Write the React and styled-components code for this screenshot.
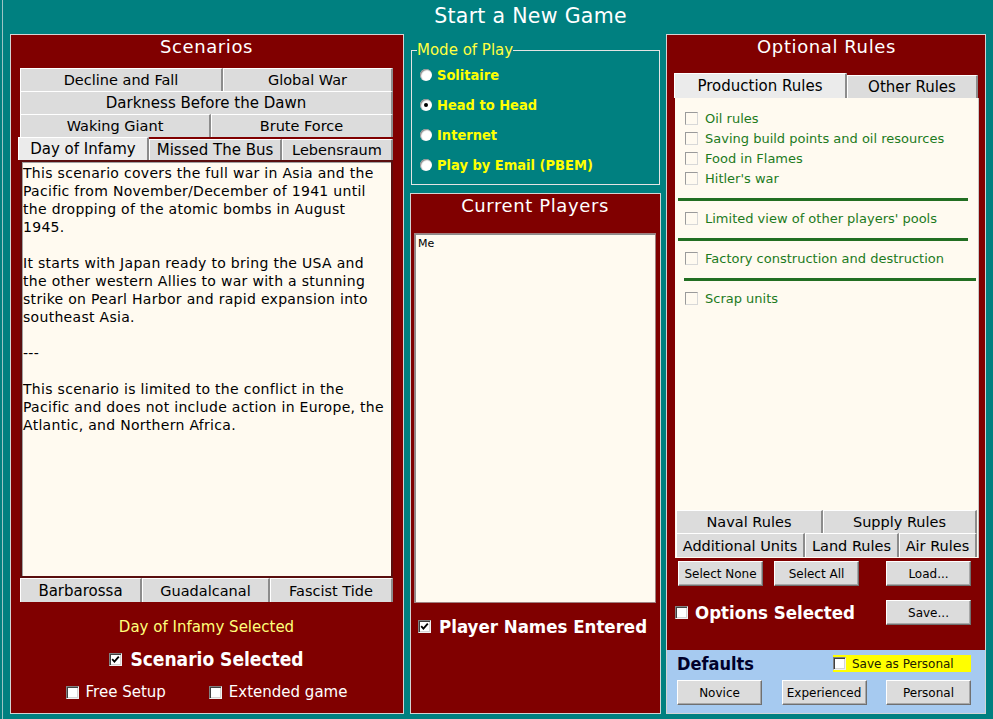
import React from "react";
import styled, { createGlobalStyle } from "styled-components";

const FONT = `"DejaVu Sans", Verdana, sans-serif`;
const BOLDFONT = `"DejaVu Sans Condensed", "DejaVu Sans", Verdana, sans-serif`;

const GlobalStyle = createGlobalStyle`
  html, body { margin: 0; padding: 0; background: #008080; }
  body { font-family: ${FONT}; }
  * { box-sizing: border-box; }
`;

const Window = styled.div`
  width: 993px;
  height: 719px;
  background: #008080;
  display: flex;
  flex-direction: column;
  overflow: hidden;
  box-shadow: inset 2px 0 0 #008080, inset 3px 0 0 #9cc4c4;
`;

const Header = styled.div`
  height: 34px;
  display: flex;
  align-items: center;
  justify-content: center;
  padding: 0 0 3px 68px;
  color: #ffffff;
  font-size: 20.5px;
  letter-spacing: 0.3px;
`;

const Columns = styled.div`
  display: flex;
  gap: 6px;
  padding-left: 10px;
  height: 680px;
`;

const Panel = styled.div`
  width: ${(p) => p.$w}px;
  margin-left: ${(p) => p.$ml ?? 0}px;
  background: #800000;
  border: 1px solid #d4d4d4;
  display: flex;
  flex-direction: column;
  padding: ${(p) => p.$pad || "0"};
`;

const PanelTitle = styled.div`
  height: 24px;
  line-height: 24px;
  text-align: center;
  color: #fff;
  font-size: 18px;
  letter-spacing: 0.6px;
  margin-bottom: ${(p) => p.$mb ?? 0}px;
`;

const TabRow = styled.div`
  display: flex;
  height: ${(p) => p.$h ?? 23}px;
  align-items: flex-end;
`;

const Tab = styled.div`
  width: ${(p) => p.$w}px;
  flex: ${(p) => (p.$w ? "none" : "1")};
  height: ${(p) => (p.$short ? "calc(100% - 2px)" : "100%")};
  margin-left: ${(p) => p.$ml ?? 0}px;
  background: ${(p) => (p.$active ? "#ebebeb" : "#dcdcdc")};
  border-top: 1px solid #ffffff;
  border-left: 1px solid #ffffff;
  border-right: 2px solid #8c8c8c;
  color: #000;
  font-size: ${(p) => p.$fs ?? 14.5}px;
  display: flex;
  align-items: center;
  justify-content: center;
  white-space: nowrap;
`;

const TextArea = styled.div`
  height: ${(p) => p.$h}px;
  background: #fffaf0;
  border: 2px solid #5a0e0e;
  box-shadow: inset 1px 1px 0 #a0a0a0;
  padding: 2px 1px 0 1px;
  color: #000;
  font-size: 14px;
  letter-spacing: 0.3px;
  line-height: 18px;
  white-space: pre-wrap;
`;

const StatusText = styled.div`
  text-align: center;
  color: #ffff7a;
  font-size: 15px;
  line-height: 20px;
  margin-top: ${(p) => p.$mt ?? 0}px;
`;

const CheckRow = styled.label`
  display: flex;
  align-items: center;
  justify-content: ${(p) => (p.$center ? "center" : "flex-start")};
  gap: ${(p) => p.$gap ?? 6}px;
  height: ${(p) => p.$h ?? 20}px;
  margin-top: ${(p) => p.$mt ?? 0}px;
  padding-left: ${(p) => p.$pl ?? 0}px;
  color: ${(p) => p.$color || "#fff"};
  font-family: ${(p) => (p.$bold ? BOLDFONT : FONT)};
  font-weight: ${(p) => (p.$bold ? 700 : 400)};
  font-size: ${(p) => p.$fs ?? 14}px;
  white-space: nowrap;
`;

const BoxWrap = styled.span`
  display: inline-flex;
  align-items: center;
  justify-content: center;
  flex: none;
  width: 13px;
  height: 13px;
  background: ${(p) => (p.$flat ? "#fffaf0" : "#ffffff")};
  border: 1px solid;
  border-color: ${(p) =>
    p.$flat ? "#9a9a9a #d8d8d8 #d8d8d8 #9a9a9a" : "#808080 #f0f0f0 #f0f0f0 #808080"};
  box-shadow: ${(p) => (p.$flat ? "none" : "inset 1px 1px 0 #404040, inset -1px -1px 0 #d4d4d4")};
`;

const Check = ({ checked, flat }) => (
  <BoxWrap $flat={flat}>
    {checked && (
      <svg width="9" height="9" viewBox="0 0 9 9">
        <path d="M1.2 4.2 L3.4 6.6 L7.8 1.6" fill="none" stroke="#000" strokeWidth="1.8" />
      </svg>
    )}
  </BoxWrap>
);

const Inline = styled.div`
  display: flex;
  justify-content: center;
  gap: ${(p) => p.$gap ?? 40}px;
  margin-top: ${(p) => p.$mt ?? 0}px;
`;

/* Middle column */
const MiddleCol = styled.div`
  width: 251px;
  display: flex;
  flex-direction: column;
  gap: 8px;
`;

const ModeSet = styled.fieldset`
  margin: 8px 1px 0 1px;
  padding: 2px 0 0 8px;
  height: 143px;
  border: 1px solid #e4e4e4;
  display: flex;
  flex-direction: column;
`;

const Legend = styled.legend`
  padding: 0;
  margin-left: -3px;
  color: #ffff40;
  font-size: 15px;
  line-height: 16px;
`;

const RadioRow = styled.label`
  display: flex;
  align-items: center;
  gap: 5px;
  height: 30px;
  color: #ffff00;
  font-family: ${BOLDFONT};
  font-weight: 700;
  font-size: 14.5px;
`;

const RadioDot = styled.span`
  width: 12px;
  height: 12px;
  border-radius: 50%;
  background: radial-gradient(circle at 60% 60%, #ffffff 45%, #e4e4e4 80%);
  box-shadow: inset 1px 1px 1px #8a8a8a;
  display: inline-flex;
  align-items: center;
  justify-content: center;
  &::after {
    content: "";
    width: 4px;
    height: 4px;
    border-radius: 50%;
    background: ${(p) => (p.$on ? "#000" : "transparent")};
  }
`;

const PlayersPanel = styled(Panel)`
  flex: 1;
  padding: 0 4px 0 3px;
`;

const ListBox = styled.div`
  margin-top: 15px;
  height: 370px;
  background: #fffaf0;
  border: 1px solid #a08080;
  box-shadow: inset 1px 1px 0 #8c8c8c;
  padding: 3px 3px;
  font-size: 11px;
  color: #000;
`;

/* Right column */
const RuleBox = styled.div`
  height: 460px;
  margin-right: -1px;
  background: #fffaf0;
  display: flex;
  flex-direction: column;
  padding-bottom: 1px;
  border-right: 1px solid #c8c8c8;
`;

const RuleList = styled.div`
  flex: 1;
  padding: 10px 0 0 10px;
  display: flex;
  flex-direction: column;
`;

const RuleItem = styled.label`
  display: flex;
  align-items: center;
  gap: 7px;
  height: 20px;
  color: #1d7a1d;
  font-size: 13px;
`;

const Divider = styled.div`
  height: 3px;
  background: #226e22;
  margin: ${(p) => p.$m};
`;

const ButtonRow = styled.div`
  display: flex;
  align-items: center;
  justify-content: space-between;
  padding: 0 ${(p) => p.$pr ?? 7}px 0 ${(p) => p.$pl ?? 3}px;
  margin-top: ${(p) => p.$mt ?? 0}px;
`;

const Btn = styled.button`
  width: ${(p) => p.$w ?? 85}px;
  height: 25px;
  margin-left: ${(p) => p.$ml ?? 0}px;
  background: #dcdcdc;
  border: 1px solid;
  border-color: #ffffff #707070 #707070 #ffffff;
  box-shadow: inset -1px -1px 0 #a8a8a8;
  font-family: ${FONT};
  font-size: 12px;
  color: #000;
  padding: 0;
`;

const Spacer = styled.div`
  flex: 1;
`;

const Defaults = styled.div`
  margin-top: auto;
  height: 63px;
  margin-left: -8px;
  margin-right: -7px;
  background: #a6caf0;
  padding: 3px 14px 0 10px;
  display: flex;
  flex-direction: column;
`;

const DefaultsHead = styled.div`
  display: flex;
  align-items: center;
  justify-content: space-between;
  height: 21px;
`;

const DefaultsTitle = styled.div`
  color: #00002a;
  font-family: ${BOLDFONT};
  font-weight: 700;
  font-size: 18px;
`;

const Highlight = styled.label`
  display: flex;
  align-items: center;
  gap: 6px;
  width: 138px;
  height: 17px;
  background: #ffff00;
  color: #202000;
  font-size: 12px;
`;

const scenarioText = `This scenario covers the full war in Asia and the Pacific from November/December of 1941 until the dropping of the atomic bombs in August 1945.

It starts with Japan ready to bring the USA and the other western Allies to war with a stunning strike on Pearl Harbor and rapid expansion into southeast Asia.

---

This scenario is limited to the conflict in the Pacific and does not include action in Europe, the Atlantic, and Northern Africa.`;

export default function App() {
  return (
    <>
      <GlobalStyle />
      <Window>
        <Header>Start a New Game</Header>
        <Columns>
          <Panel $w={394} $pad="0 10px 0 9px">
            <PanelTitle $mb={9}>Scenarios</PanelTitle>
            <TabRow>
              <Tab $w={203}>Decline and Fall</Tab>
              <Tab $w={170}>Global War</Tab>
            </TabRow>
            <TabRow>
              <Tab $fs={15}>Darkness Before the Dawn</Tab>
            </TabRow>
            <TabRow $h={23}>
              <Tab $w={191}>Waking Giant</Tab>
              <Tab $w={182}>Brute Force</Tab>
            </TabRow>
            <TabRow $h={23}>
              <Tab $w={131} $ml={-2} $fs={15} $active>Day of Infamy</Tab>
              <Tab $w={133} $fs={15} $short>Missed The Bus</Tab>
              <Tab $w={111} $short>Lebensraum</Tab>
            </TabRow>
            <TextArea $h={418}>{scenarioText}</TextArea>
            <TabRow $h={24}>
              <Tab $w={122} $fs={15}>Barbarossa</Tab>
              <Tab $w={128}>Guadalcanal</Tab>
              <Tab $w={123}>Fascist Tide</Tab>
            </TabRow>
            <StatusText $mt={15}>Day of Infamy Selected</StatusText>
            <CheckRow $center $h={24} $mt={10} $fs={19} $bold $gap={8}>
              <Check checked />
              Scenario Selected
            </CheckRow>
            <Inline $gap={43} $mt={12}>
              <CheckRow $h={18} $fs={15} $gap={7}>
                <Check />
                Free Setup
              </CheckRow>
              <CheckRow $h={18} $fs={15} $gap={7}>
                <Check />
                Extended game
              </CheckRow>
            </Inline>
          </Panel>

          <MiddleCol>
            <ModeSet>
              <Legend>Mode of Play</Legend>
              <RadioRow>
                <RadioDot />
                Solitaire
              </RadioRow>
              <RadioRow>
                <RadioDot $on />
                Head to Head
              </RadioRow>
              <RadioRow>
                <RadioDot />
                Internet
              </RadioRow>
              <RadioRow>
                <RadioDot />
                Play by Email (PBEM)
              </RadioRow>
            </ModeSet>
            <PlayersPanel>
              <PanelTitle>Current Players</PanelTitle>
              <ListBox>Me</ListBox>
              <CheckRow $h={24} $mt={11} $pl={4} $fs={18.5} $bold $gap={8}>
                <Check checked />
                Player Names Entered
              </CheckRow>
            </PlayersPanel>
          </MiddleCol>

          <Panel $w={320} $ml={-1} $pad="0 7px 0 8px">
            <PanelTitle $mb={14}>Optional Rules</PanelTitle>
            <TabRow $h={25}>
              <Tab $w={173} $ml={-1} $fs={15} $active>Production Rules</Tab>
              <Tab $w={131} $fs={15} $short>Other Rules</Tab>
            </TabRow>
            <RuleBox>
              <RuleList>
                <RuleItem><Check flat />Oil rules</RuleItem>
                <RuleItem><Check flat />Saving build points and oil resources</RuleItem>
                <RuleItem><Check flat />Food in Flames</RuleItem>
                <RuleItem><Check flat />Hitler's war</RuleItem>
                <Divider $m="10px 10px 7px -7px" />
                <RuleItem><Check flat />Limited view of other players' pools</RuleItem>
                <Divider $m="10px 10px 7px -7px" />
                <RuleItem><Check flat />Factory construction and destruction</RuleItem>
                <Divider $m="10px 2px 7px -1px" />
                <RuleItem><Check flat />Scrap units</RuleItem>
              </RuleList>
              <TabRow $h={23}>
                <Tab $w={147} $ml={1}>Naval Rules</Tab>
                <Tab $w={154}>Supply Rules</Tab>
              </TabRow>
              <TabRow $h={24}>
                <Tab $w={129} $ml={1}>Additional Units</Tab>
                <Tab $w={94}>Land Rules</Tab>
                <Tab $w={78}>Air Rules</Tab>
              </TabRow>
            </RuleBox>
            <ButtonRow $mt={3}>
              <Btn>Select None</Btn>
              <Btn $ml={11}>Select All</Btn>
              <Spacer />
              <Btn>Load...</Btn>
            </ButtonRow>
            <ButtonRow $mt={14} $pl={0}>
              <CheckRow $h={24} $fs={18.5} $bold $gap={7}>
                <Check />
                Options Selected
              </CheckRow>
              <Btn>Save...</Btn>
            </ButtonRow>
            <Defaults>
              <DefaultsHead>
                <DefaultsTitle>Defaults</DefaultsTitle>
                <Highlight>
                  <Check />
                  Save as Personal
                </Highlight>
              </DefaultsHead>
              <ButtonRow $mt={6} $pl={0} $pr={0}>
                <Btn>Novice</Btn>
                <Btn>Experienced</Btn>
                <Btn>Personal</Btn>
              </ButtonRow>
            </Defaults>
          </Panel>
        </Columns>
      </Window>
    </>
  );
}
